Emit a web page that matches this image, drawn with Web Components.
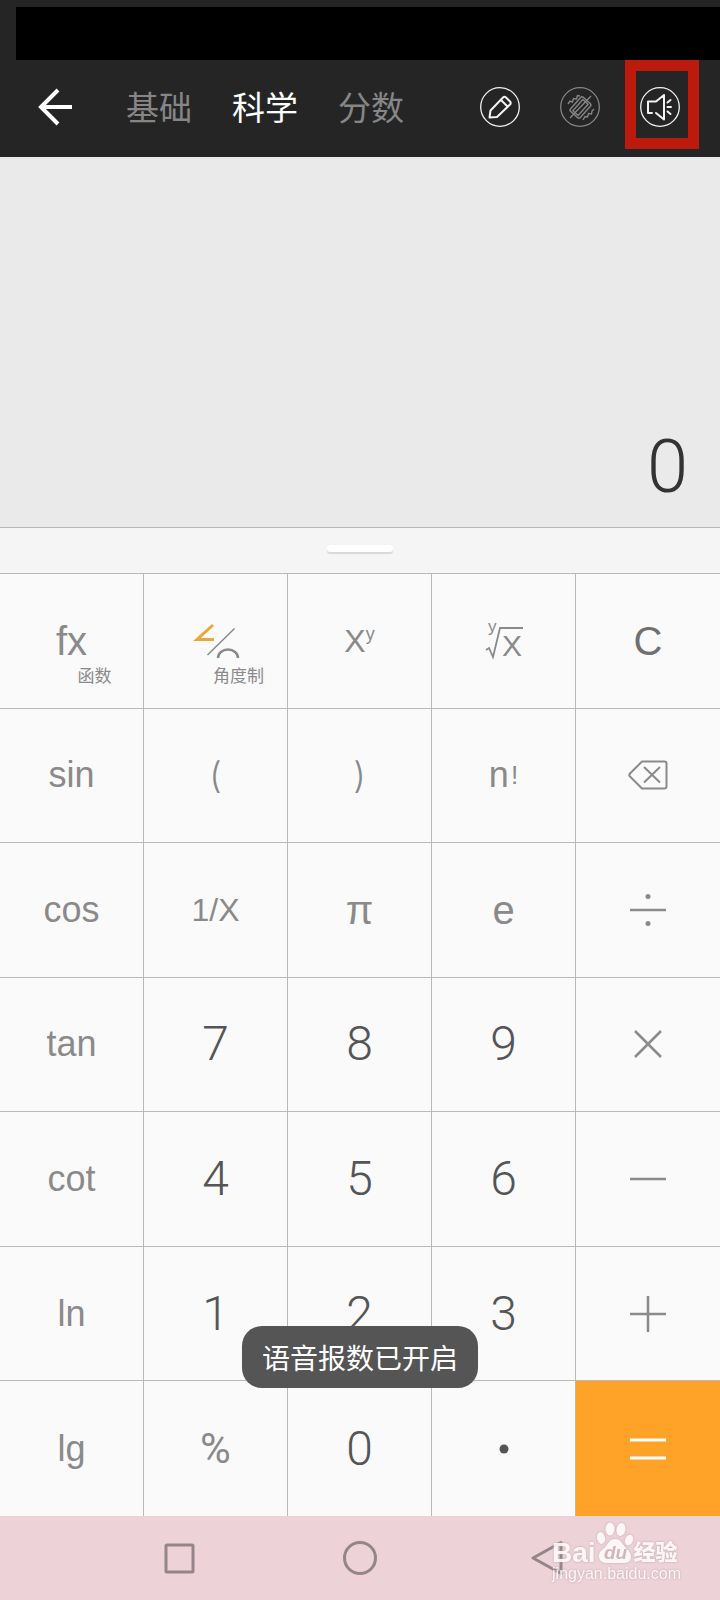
<!DOCTYPE html>
<html lang="zh-CN">
<head>
<meta charset="utf-8">
<meta name="viewport" content="width=device-width, initial-scale=1">
<title>计算器</title>
<style>
    body{
        margin: 0;
        background: #fafafa;
        font-family: "Liberation Sans", "Noto Sans CJK SC", sans-serif;
    }
</style>
</head>
<body>
<calc-app></calc-app>

<script>
class CalcHeader extends HTMLElement{
    constructor(){
        super();
        this.shadowDOM = this.attachShadow({mode: "open"});
        this.render();
    }

    render(){
        this.shadowDOM.innerHTML = `
            <style>
                :host{
                    display: block;
                    background: #252525;
                    padding-top: 7px;
                }
                .status{
                    height: 53px;
                    margin-left: 16px;
                    background: #000;
                }
                .bar{
                    display: flex;
                    align-items: center;
                    height: 97px;
                    padding: 0 40px 3px 38px;
                    box-sizing: border-box;
                }
                button{
                    display: block;
                    padding: 0;
                    border: 0;
                    background: none;
                    color: inherit;
                    font: inherit;
                }
                svg{
                    display: block;
                    fill: none;
                    stroke: currentColor;
                }
                .back{
                    color: #fff;
                }
                nav{
                    display: flex;
                    gap: 40px;
                    margin-left: 52px;
                    padding-top: 4px;
                    color: #868686;
                    font-size: 33px;
                    line-height: 48px;
                }
                nav .active{
                    color: #fff;
                }
                .tools{
                    display: flex;
                    gap: 40px;
                    margin-left: auto;
                    color: #f2f2f2;
                }
                .off{
                    color: #858585;
                }
                .sound{
                    position: relative;
                }
                .mark{
                    position: absolute;
                    inset: -27px -19px -22px -15px;
                    border: 11px solid #bc1a0c;
                }
            </style>
            <div class="status"></div>
            <div class="bar">
                <button class="back" aria-label="返回">
                    <svg width="36" height="38" viewBox="0 0 36 38" stroke-width="4">
                        <path d="M20 2 3 19l17 17M3 19h31"/>
                    </svg>
                </button>
                <nav>
                    <button>基础</button>
                    <button class="active">科学</button>
                    <button>分数</button>
                </nav>
                <div class="tools">
                    <button aria-label="编辑">
                        <svg width="40" height="40" viewBox="0 0 40 40" stroke-width="1.300">
                            <circle cx="20" cy="20" r="19.300"/>
                            <path stroke-width="2" stroke-linejoin="round" d="M9.500 30.500 10.500 23.500 23 10.500q1.500-1.500 3 0l4 4q1.500 1.500 0 3L17 30ZM21 13l6.500 6.500"/>
                        </svg>
                    </button>
                    <button class="off" aria-label="振动">
                        <svg width="40" height="40" viewBox="0 0 40 40" stroke-width="1.300">
                            <circle cx="20" cy="20" r="19.300"/>
                            <g stroke-width="1.400">
                                <path d="M10 31 31 9"/>
                                <rect x="14" y="11" width="13" height="19" rx="2" transform="rotate(42 20.500 20.500)"/>
                                <rect x="17" y="13" width="7" height="15" transform="rotate(42 20.500 20.500)"/>
                                <path d="m8 17 2-3 2.500 1 1-3.500 3 .5 1-3.500 2.500.500M23 33l2-3.500 2.500.500 1-3.500 3 .500.500-3 2-2"/>
                            </g>
                        </svg>
                    </button>
                    <div class="sound">
                        <button aria-label="语音报数">
                            <svg width="40" height="40" viewBox="0 0 40 40" stroke-width="1.300">
                                <circle cx="20" cy="20" r="19.300"/>
                                <path stroke-width="2" stroke-linecap="round" stroke-linejoin="round" d="M12 26H8V14.500h8L24 8v24.500L16 26M27.500 15.500l3-2.500M27.500 20H31M27.500 24.500l3 2.500"/>
                            </svg>
                        </button>
                        <div class="mark"></div>
                    </div>
                </div>
            </div>`;
    }
}

class CalcDisplay extends HTMLElement{
    constructor(){
        super();
        this.shadowDOM = this.attachShadow({mode: "open"});
        this.shadowDOM.innerHTML = `
            <style>
                :host{
                    display: block;
                }
                output{
                    display: flex;
                    align-items: flex-end;
                    justify-content: flex-end;
                    height: 370px;
                    padding: 0 32px 18px;
                    box-sizing: border-box;
                    background: #eaeaea;
                    color: #333;
                    font: 300 74px/84px Roboto, sans-serif;
                }
                .handle{
                    display: flex;
                    align-items: center;
                    justify-content: center;
                    height: 45px;
                    padding-bottom: 4px;
                    box-sizing: content-box;
                    height: 41px;
                    border: solid #b9b9b9;
                    border-width: 1px 0;
                    background: #f5f5f5;
                }
                .handle i{
                    width: 66px;
                    height: 7px;
                    border-radius: 3px;
                    background: #fff;
                    box-shadow: 0 2px 1px #d8d8d8;
                }
            </style>
            <output><slot></slot></output>
            <div class="handle"><i></i></div>`;
    }
}

class CalcKey extends HTMLElement{
    constructor(){
        super();
        this.shadowDOM = this.attachShadow({mode: "open"});
        this.shadowDOM.innerHTML = `
            <style>
                :host{
                    display: grid;
                    box-sizing: border-box;
                    border: solid #b9b9b9;
                    border-width: 0 1px 1px 0;
                    color: #8a8a8a;
                    font-size: 36px;
                }
                :host([edge]){
                    border-right: 0;
                }
                :host([last]){
                    border-bottom: 0;
                }
                :host([kind="digit"]){
                    color: #555;
                    font-family: Roboto, sans-serif;
                    font-weight: 300;
                    font-size: 48px;
                }
                :host([kind="percent"]){
                    font-family: Roboto, sans-serif;
                    font-size: 42px;
                }
                :host([kind="paren"]){
                    font-family: Inter, sans-serif;
                    font-weight: 300;
                }
                :host([kind="large"]){
                    font-size: 40px;
                }
                :host([kind="small"]){
                    font-size: 32px;
                }
                :host([kind="clear"]){
                    color: #707070;
                    font-size: 40px;
                }
                :host([kind="equals"]){
                    background: #ffa228;
                    color: #fff;
                }
                button{
                    display: grid;
                    grid-template-rows: 1fr 50px 1fr;
                    justify-items: center;
                    padding: 0;
                    border: 0;
                    background: none;
                    color: inherit;
                    font: inherit;
                    line-height: 50px;
                }
                .face{
                    grid-row: 2;
                    display: flex;
                    align-items: center;
                }
                .hint{
                    grid-row: 3;
                    padding-left: 46px;
                    font-size: 17px;
                    line-height: 22px;
                }
                ::slotted(svg){
                    display: block;
                    fill: none;
                    stroke: currentColor;
                    stroke-width: 2.500px;
                    overflow: visible;
                }
                ::slotted(sup){
                    align-self: flex-start;
                    font-size: 18px;
                    line-height: 36px;
                }
                ::slotted(small){
                    margin-left: 2px;
                    font-size: 26px;
                }
            </style>
            <button><span class="face"><slot></slot></span></button>`;
    }

    connectedCallback(){
        if(this.hasAttribute("hint") && !this.shadowDOM.querySelector(".hint")){
            const hint = document.createElement("span");
            hint.className = "hint";
            hint.textContent = this.getAttribute("hint");
            this.shadowDOM.querySelector("button").appendChild(hint);
        }
        if(this.hasAttribute("label")){
            this.shadowDOM.querySelector("button").setAttribute("aria-label", this.getAttribute("label"));
        }
    }
}

const KEYS = [
    {face: "<span>fx</span>", kind: "large", hint: "函数"},
    {face: `<svg width="44" height="40" viewBox="0 0 44 40">
        <path d="M19 4 3 18.500h17" stroke="#eda63a" stroke-width="3"/>
        <path d="M13.500 34 40.500 7.500" stroke-width="1.500"/>
        <path d="M24 37a10 8.500 0 0 1 20 0"/></svg>`, hint: "角度制", label: "角度制"},
    {face: "<span>X</span><sup>y</sup>", kind: "small"},
    {face: `<svg width="38" height="50" viewBox="0 -6 38 50">
        <path d="M1 28l3-2 4 9 7-29h23" stroke-width="1.800"/>
        <text x="17" y="34" font-size="30" fill="currentColor" stroke="none">X</text>
        <text x="3" y="10" font-size="17" fill="currentColor" stroke="none">y</text></svg>`, kind: "root"},
    {face: "C", kind: "clear"},

    {face: "sin"},
    {face: "(", kind: "paren"},
    {face: ")", kind: "paren"},
    {face: "<span>n</span><small>!</small>"},
    {face: `<svg width="40" height="30" viewBox="0 0 40 30">
        <path stroke-width="2" stroke-linejoin="round" d="M14 1.500h22.500q2 0 2 2v23q0 2-2 2H14L2 16.500q-1.500-1.500 0-3ZM16 7l16 15.500M32 7 16 22.500"/></svg>`, label: "退格"},

    {face: "cos"},
    {face: "1/X", kind: "small"},
    {face: "π", kind: "large"},
    {face: "e", kind: "large"},
    {face: `<svg width="36" height="36" viewBox="0 0 36 36">
        <path d="M0 18h36"/><g fill="currentColor" stroke="none"><circle cx="18" cy="4.500" r="2.500"/><circle cx="18" cy="31.500" r="2.500"/></g></svg>`, label: "除"},

    {face: "tan"},
    {face: "7", kind: "digit"},
    {face: "8", kind: "digit"},
    {face: "9", kind: "digit"},
    {face: `<svg width="28" height="28" viewBox="0 0 28 28"><path d="m1 1 26 26M27 1 1 27"/></svg>`, label: "乘"},

    {face: "cot"},
    {face: "4", kind: "digit"},
    {face: "5", kind: "digit"},
    {face: "6", kind: "digit"},
    {face: `<svg width="36" height="36" viewBox="0 0 36 36"><path d="M0 18h36"/></svg>`, label: "减"},

    {face: "ln"},
    {face: "1", kind: "digit"},
    {face: "2", kind: "digit"},
    {face: "3", kind: "digit"},
    {face: `<svg width="36" height="36" viewBox="0 0 36 36"><path d="M0 18h36M18 0v36"/></svg>`, label: "加"},

    {face: "lg"},
    {face: "%", kind: "percent"},
    {face: "0", kind: "digit"},
    {face: `<svg width="10" height="10" viewBox="0 0 10 10"><circle cx="5" cy="5" r="4.500" fill="currentColor" stroke="none"/></svg>`, kind: "digit", label: "小数点"},
    {face: `<svg width="36" height="24" viewBox="0 0 36 24"><path stroke-width="3" d="M0 3h36M0 21h36"/></svg>`, kind: "equals", label: "等于"}
];

class CalcPad extends HTMLElement{
    constructor(){
        super();
        this.shadowDOM = this.attachShadow({mode: "open"});
        this.render();
    }

    render(){
        this.shadowDOM.innerHTML = `
            <style>
                :host{
                    display: grid;
                    grid-template-columns: repeat(5, 1fr);
                    grid-auto-rows: minmax(100px, 1fr);
                    background: #fafafa;
                }
            </style>`;
        KEYS.forEach((key, i) => {
            const item = document.createElement("calc-key");
            item.innerHTML = key.face;
            if(key.kind) item.setAttribute("kind", key.kind);
            if(key.hint) item.setAttribute("hint", key.hint);
            if(key.label) item.setAttribute("label", key.label);
            item.toggleAttribute("edge", i % 5 === 4);
            item.toggleAttribute("last", i >= KEYS.length - 5);
            this.shadowDOM.appendChild(item);
        });
    }
}

class CalcToast extends HTMLElement{
    constructor(){
        super();
        this.shadowDOM = this.attachShadow({mode: "open"});
        this.shadowDOM.innerHTML = `
            <style>
                :host{
                    display: block;
                    padding: 13px 20px 7px;
                    border-radius: 20px;
                    background: #555;
                    color: #fff;
                    font-size: 28px;
                    line-height: 42px;
                    white-space: nowrap;
                }
            </style>
            <slot></slot>`;
    }
}

class PhoneNav extends HTMLElement{
    constructor(){
        super();
        this.shadowDOM = this.attachShadow({mode: "open"});
        this.shadowDOM.innerHTML = `
            <style>
                :host{
                    display: grid;
                    grid-template-columns: repeat(3, 1fr);
                    height: 84px;
                    padding: 0 12.5%;
                    box-sizing: border-box;
                    background: #edd2d8;
                    color: #938589;
                }
                button{
                    display: grid;
                    place-items: center;
                    padding: 0;
                    border: 0;
                    background: none;
                    color: inherit;
                }
                svg{
                    fill: none;
                    stroke: currentColor;
                    stroke-width: 3px;
                    stroke-linejoin: round;
                    overflow: visible;
                }
            </style>
            <button aria-label="最近任务"><svg width="34" height="34"><rect x="3" y="4" width="27" height="27" rx="1"/></svg></button>
            <button aria-label="主屏幕"><svg width="34" height="34"><circle cx="17" cy="17" r="15.500"/></svg></button>
            <button aria-label="返回"><svg width="34" height="34"><path d="M38 1.500v31L10 17Z"/></svg></button>`;
    }
}

class SiteMark extends HTMLElement{
    constructor(){
        super();
        this.shadowDOM = this.attachShadow({mode: "open"});
        this.shadowDOM.innerHTML = `
            <style>
                :host{
                    display: block;
                    color: #fffafb;
                    filter: drop-shadow(0 0 1px #b9a3a9);
                    opacity: .9;
                }
                .logo{
                    display: flex;
                    align-items: flex-end;
                    height: 42px;
                    font-weight: 700;
                    font-size: 28px;
                    line-height: 22px;
                }
                .logo b{
                    font-size: 22px;
                }
                svg{
                    display: block;
                    fill: currentColor;
                }
                .site{
                    font-size: 16px;
                    line-height: 20px;
                }
            </style>
            <div class="logo">
                <span>Bai</span>
                <svg width="38" height="42" viewBox="0 0 38 42">
                    <ellipse cx="5" cy="16" rx="4" ry="6" transform="rotate(-12 5 16)"/>
                    <ellipse cx="14" cy="7" rx="4.500" ry="6.500"/>
                    <ellipse cx="25" cy="7.500" rx="4.500" ry="6.500" transform="rotate(10 25 7)"/>
                    <ellipse cx="33" cy="18" rx="4" ry="5.500" transform="rotate(20 33 18)"/>
                    <path d="M19 17c-6 0-7 6-12 10-4 3-5 6-4 9 1 4 5 5 8 5h16c4 0 8-1 8-6 0-4-2-6-5-9-4-4-5-9-11-9Z"/>
                    <text x="8" y="37" font-size="19" font-style="italic" fill="#cdb5bb">du</text>
                </svg>
                <b>经验</b>
            </div>
            <div class="site">jingyan.baidu.com</div>`;
    }
}

class CalcApp extends HTMLElement{
    constructor(){
        super();
        this.shadowDOM = this.attachShadow({mode: "open"});
        this.shadowDOM.innerHTML = `
            <style>
                :host{
                    position: relative;
                    display: flex;
                    flex-direction: column;
                    min-height: 100vh;
                }
                calc-pad{
                    flex: 1;
                }
                calc-toast{
                    position: absolute;
                    bottom: 212px;
                    left: 50%;
                    transform: translateX(-50%);
                }
                site-mark{
                    position: absolute;
                    right: 39px;
                    bottom: 16px;
                }
            </style>
            <calc-header></calc-header>
            <calc-display>0</calc-display>
            <calc-pad></calc-pad>
            <phone-nav></phone-nav>
            <calc-toast role="status">语音报数已开启</calc-toast>
            <site-mark></site-mark>`;
    }
}

customElements.define("calc-header", CalcHeader);
customElements.define("calc-display", CalcDisplay);
customElements.define("calc-key", CalcKey);
customElements.define("calc-pad", CalcPad);
customElements.define("calc-toast", CalcToast);
customElements.define("phone-nav", PhoneNav);
customElements.define("site-mark", SiteMark);
customElements.define("calc-app", CalcApp);
</script>
</body>
</html>
